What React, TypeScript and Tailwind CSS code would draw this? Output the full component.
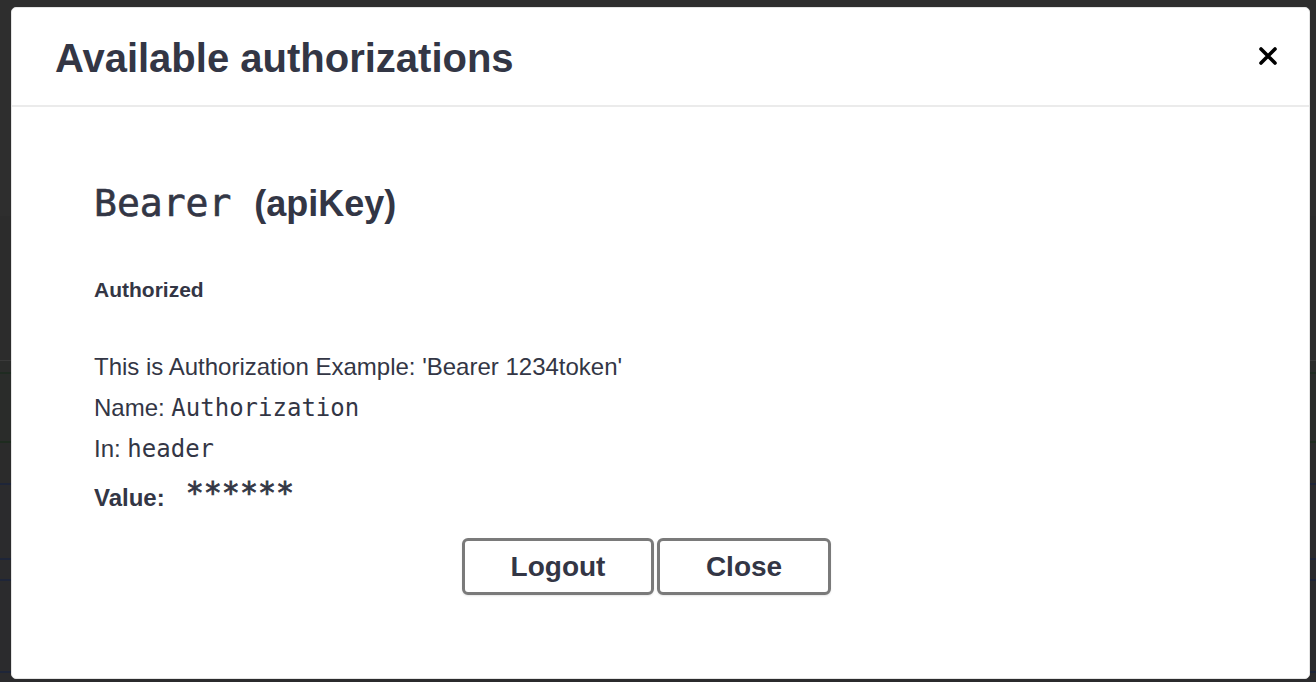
import React from "react";

const SANS = { fontFamily: '"Liberation Sans", Arial, sans-serif' };
const MONO = { fontFamily: '"DejaVu Sans Mono", "Liberation Mono", monospace' };

function CloseIcon() {
  return (
    <svg width="20" height="20" viewBox="0 0 20 20" aria-hidden="true">
      <path d="M3 3 L17 17 M17 3 L3 17" stroke="#000" strokeWidth="3.6" strokeLinecap="round" />
    </svg>
  );
}

// dimmed page behind the overlay
function Backdrop() {
  return (
    <div className="flex flex-col h-[682px] w-full">
      <div className="h-[216px] bg-[#2e2e2e]" />
      <div className="h-[144px] bg-[#2c2c2c]" />
      <div className="h-px bg-[#3a3a3a]" />
      <div className="h-[11px] bg-[#2b2c2b]" />
      <div className="h-[2px] bg-[#1f2b21]" />
      <div className="h-[67px] bg-[#2a2c2a]" />
      <div className="h-[2px] bg-[#1e2b1f]" />
      <div className="h-[40px] bg-[#2b2b2b]" />
      <div className="h-[2px] bg-[#1e2538]" />
      <div className="h-[73px] bg-[#2b2b2d]" />
      <div className="h-[2px] bg-[#1e2538]" />
      <div className="h-[19px] bg-[#2b2b2d]" />
      <div className="h-[2px] bg-[#1e2538]" />
      <div className="h-[90px] bg-[#2b2b2d]" />
      <div className="h-[2px] bg-[#1e2538]" />
      <div className="flex-1 bg-[#2b2b2d]" />
    </div>
  );
}

export default function App() {
  return (
    <div className="relative w-[1316px] h-[682px] overflow-hidden bg-[#2b2b2b]" style={SANS}>
      <Backdrop />

      {/* ── Modal ─────────────────────────────────────────── */}
      <div className="absolute left-[11px] top-[7px] w-[1299px] h-[672px] bg-white rounded-[5px] border border-[#e4e4e4] flex flex-col text-[#333645]">
        <header className="h-[99px] shrink-0 border-b-2 border-[#ebebeb] flex items-center justify-between pl-[43px] pr-[30px]">
          <h3 className="text-[40px] font-bold leading-none pt-[2px]">Available authorizations</h3>
          <button className="flex items-center justify-center w-[22px] h-[22px] mt-[-2px]">
            <CloseIcon />
          </button>
        </header>

        <div className="pl-[82px] pr-[110px] flex flex-col">
          <h4 className="mt-[74px] text-[36px] font-bold leading-[44px] whitespace-nowrap">
            <code className="text-[38px] font-normal [-webkit-text-stroke:0.6px_#333645]" style={MONO}>
              Bearer
            </code>
            <span className="ml-[23px]">(apiKey)</span>
          </h4>

          <h6 className="mt-[52px] text-[21px] font-bold leading-[24px]">Authorized</h6>

          <div className="mt-[45px] text-[24px] leading-[40px]">
            <p>This is Authorization Example: 'Bearer 1234token'</p>
            <p className="mt-px">
              Name: <code style={MONO}>Authorization</code>
            </p>
            <p className="mt-px">
              In: <code style={MONO}>header</code>
            </p>
          </div>

          <div className="mt-[7px] flex items-baseline text-[24px] leading-[40px]">
            <label className="font-bold">Value:</label>
            <code
              className="ml-[21px] text-[30px] leading-[40px] relative top-[-3px] [-webkit-text-stroke:0.8px_#333645]"
              style={MONO}
            >
              ******
            </code>
          </div>

          <div className="mt-[20px] flex justify-center gap-[3px]">
            <button className="w-[192px] h-[57px] rounded-[6px] border-[3px] border-[#7a7a7a] bg-white text-[28px] font-bold shadow-[0_1px_2px_rgba(0,0,0,0.1)]">
              Logout
            </button>
            <button className="w-[174px] h-[57px] rounded-[6px] border-[3px] border-[#7a7a7a] bg-white text-[28px] font-bold shadow-[0_1px_2px_rgba(0,0,0,0.1)]">
              Close
            </button>
          </div>
        </div>
      </div>
    </div>
  );
}
